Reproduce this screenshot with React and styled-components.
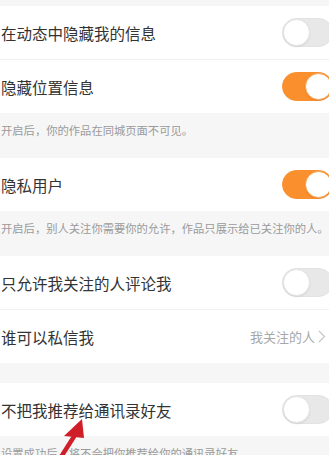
import React from 'react';
import styled, { createGlobalStyle } from 'styled-components';

const GlobalStyle = createGlobalStyle`
    html, body {
        margin: 0;
        padding: 0;
        background: #f6f6f6;
        overflow: hidden;
        font-family: "Noto Sans CJK SC", "Noto Sans", sans-serif;
    }
`;

const settings = [
    { type: 'gap', h: 6 },
    { type: 'switch', label: '在动态中隐藏我的信息', on: false },
    { type: 'line' },
    { type: 'switch', label: '隐藏位置信息', on: true },
    { type: 'note', text: '开启后，你的作品在同城页面不可见。' },
    { type: 'switch', label: '隐私用户', on: true },
    { type: 'note', text: '开启后，别人关注你需要你的允许，作品只展示给已关注你的人。' },
    { type: 'switch', label: '只允许我关注的人评论我', on: false },
    { type: 'line' },
    { type: 'link', label: '谁可以私信我', value: '我关注的人' },
    { type: 'gap', h: 20 },
    { type: 'switch', label: '不把我推荐给通讯录好友', on: false },
    { type: 'note', text: '设置成功后，将不会把你推荐给你的通讯录好友' },
];

const App = () => {
    return (
        <Page>
            <GlobalStyle />
            {settings.map((item, i) => {
                if (item.type === 'gap') return <Gap key={i} $h={item.h} />;
                if (item.type === 'line') return <Line key={i} />;
                if (item.type === 'note') return <Note key={i}>{item.text}</Note>;
                return (
                    <Row key={i}>
                        <Label>{item.label}</Label>
                        {item.type === 'switch' ? (
                            <Switch $on={item.on}>
                                <Knob $on={item.on} />
                            </Switch>
                        ) : (
                            <Value>
                                {item.value}
                                <svg width="8" height="13" viewBox="0 0 8 13">
                                    <polyline points="1,1 6.5,6.5 1,12" fill="none" stroke="#c4c4c4" strokeWidth="1.1" />
                                </svg>
                            </Value>
                        )}
                    </Row>
                );
            })}
            {/* 빨간 화살표 (스크린샷 위 표시) */}
            <Arrow width="40" height="50" viewBox="0 0 40 50">
                <polygon points="22,14 4,31 24,33" fill="#d01e29" />
                <line x1="15" y1="30" x2="1" y2="52" stroke="#d01e29" strokeWidth="4.5" />
            </Arrow>
        </Page>
    );
};

const Page = styled.div`
    position: relative;
    width: 100%;
    height: 455px;
    overflow: hidden;
`;

const Gap = styled.div`
    height: ${(props) => props.$h}px;
`;

const Line = styled.div`
    height: 1px;
    background: #f1f1f1;
`;

const Row = styled.div`
    height: 53px;
    background: #fff;
    display: flex;
    align-items: center;
    justify-content: space-between;
    padding-left: 1px;
    padding-right: 3px;
`;

const Label = styled.span`
    font-size: 15.5px;
    color: #333;
`;

const Switch = styled.div`
    width: 51px;
    height: 29px;
    box-sizing: border-box;
    margin-right: -7px;
    border-radius: 15px;
    background: ${(props) => (props.$on ? '#fa8f2d' : '#e8e8e8')};
    border: 1px solid ${(props) => (props.$on ? '#fa8f2d' : '#e2e2e2')};
    display: flex;
    align-items: center;
    justify-content: ${(props) => (props.$on ? 'flex-end' : 'flex-start')};
`;

const Knob = styled.div`
    width: 27px;
    height: 27px;
    box-sizing: border-box;
    border-radius: 50%;
    background: #fff;
    border: 1px solid ${(props) => (props.$on ? '#f5a555' : '#e4e4e4')};
    box-shadow: 0 1px 2px rgba(0, 0, 0, 0.08);
`;

const Value = styled.span`
    display: flex;
    align-items: center;
    gap: 3px;
    font-size: 13px;
    color: #a8a8a8;
`;

const Note = styled.div`
    padding: 11px 0 21px 1px;
    font-size: 11.3px;
    line-height: 13px;
    color: #9a9a9a;
    white-space: nowrap;
`;

const Arrow = styled.svg`
    position: absolute;
    left: 60px;
    top: 405px;
    overflow: visible;
`;

export default App;
